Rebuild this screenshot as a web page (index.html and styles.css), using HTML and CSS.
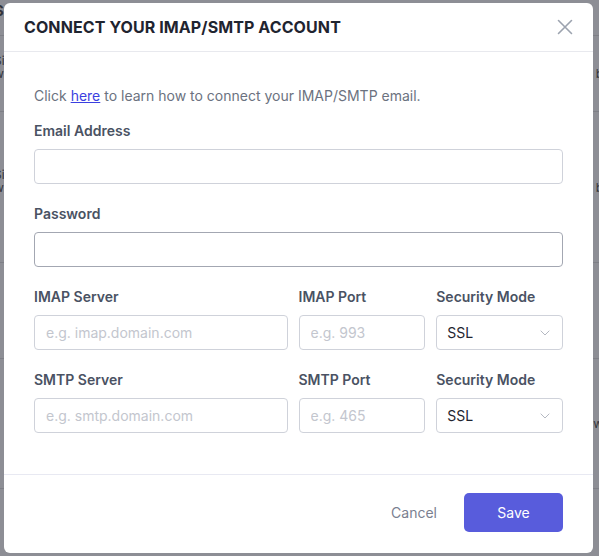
FILE: index.html
```html
<!DOCTYPE html>
<html>
<head>
<meta charset="utf-8">
<link rel="stylesheet" href="styles.css">
</head>
<body>
<div class="page">
  <div class="bg-row bg-head"><span class="bg-l bold">S</span></div>
  <div class="bg-row bg-r1"><div class="bg-col"><span>Si</span><span>w</span><span>r</span></div><span class="bg-right">b</span></div>
  <div class="bg-row bg-r2"><div class="bg-col"><span>Si</span><span>w</span><span>r</span></div><span class="bg-right">b</span></div>
  <div class="bg-row bg-r3"><div class="bg-col"><span>l</span><span>l</span></div></div>
  <div class="bg-row bg-r4"><div class="bg-col"><span>r</span></div><span class="bg-right">w</span></div>
</div>

<div class="overlay">
  <div class="modal">
    <div class="modal-header">
      <h2 class="modal-title">CONNECT YOUR IMAP/SMTP ACCOUNT</h2>
      <button class="close-btn" aria-label="Close">
        <svg width="16" height="16" viewBox="0 0 16 16"><path d="M1.5 1.5 L14.5 14.5 M14.5 1.5 L1.5 14.5" stroke="#9ca3af" stroke-width="1.6" fill="none" stroke-linecap="round"/></svg>
      </button>
    </div>
    <div class="modal-body">
      <p class="intro">Click <a href="#" class="link">here</a> to learn how to connect your IMAP/SMTP email.</p>
      <div class="field">
        <label class="label">Email Address</label>
        <input class="input" type="text">
      </div>
      <div class="field">
        <label class="label">Password</label>
        <input class="input input-dark" type="password">
      </div>
      <div class="grid-row field">
        <div>
          <label class="label">IMAP Server</label>
          <input class="input" type="text" placeholder="e.g. imap.domain.com">
        </div>
        <div>
          <label class="label">IMAP Port</label>
          <input class="input" type="text" placeholder="e.g. 993">
        </div>
        <div>
          <label class="label">Security Mode</label>
          <div class="select"><span>SSL</span><svg width="10" height="6" viewBox="0 0 10 6"><path d="M0.7 0.7 L5 5 L9.3 0.7" stroke="#b5b9c2" stroke-width="1" fill="none"/></svg></div>
        </div>
      </div>
      <div class="grid-row">
        <div>
          <label class="label">SMTP Server</label>
          <input class="input" type="text" placeholder="e.g. smtp.domain.com">
        </div>
        <div>
          <label class="label">SMTP Port</label>
          <input class="input" type="text" placeholder="e.g. 465">
        </div>
        <div>
          <label class="label">Security Mode</label>
          <div class="select"><span>SSL</span><svg width="10" height="6" viewBox="0 0 10 6"><path d="M0.7 0.7 L5 5 L9.3 0.7" stroke="#b5b9c2" stroke-width="1" fill="none"/></svg></div>
        </div>
      </div>
    </div>
    <div class="modal-footer">
      <button class="btn-cancel">Cancel</button>
      <button class="btn-save">Save</button>
    </div>
  </div>
</div>
</body>
</html>
```

FILE: styles.css
```css
* { box-sizing: border-box; }
html, body { margin: 0; padding: 0; }
body {
  width: 599px;
  height: 556px;
  overflow: hidden;
  position: relative;
  font-family: Inter, "Noto Sans", sans-serif;
  background: #8d8e95;
}

/* faint page behind the backdrop */
.page {
  width: 599px;
  height: 556px;
  display: flex;
  flex-direction: column;
  color: #33343a;
  font-size: 12px;
}
.bg-row {
  border-bottom: 1px solid #7e7f86;
  display: flex;
  justify-content: space-between;
  align-items: center;
}
.bg-head { height: 36px; align-items: flex-start; padding-top: 2px; }
.bg-l { margin-left: -6px; font-size: 15px; line-height: 18px; }
.bold { font-weight: 700; }
.bg-r1 { height: 76px; }
.bg-r2 { height: 151px; }
.bg-r3 { height: 96px; }
.bg-r4 { height: 130px; }
.bg-col {
  display: flex;
  flex-direction: column;
  margin-left: -6px;
  line-height: 13px;
}
.bg-right { margin-right: -4px; }

.overlay {
  position: absolute;
  inset: 0;
}
.modal {
  position: absolute;
  left: 4px;
  top: 3px;
  width: 589px;
  height: 550px;
  background: #fff;
  border-radius: 6px;
  display: flex;
  flex-direction: column;
  overflow: hidden;
}

.modal-header {
  height: 49px;
  border-bottom: 1px solid #e8e9ee;
  display: flex;
  align-items: center;
  justify-content: space-between;
  padding: 0 20px 0 20px;
}
.modal-title {
  margin: 0;
  font-size: 16px;
  font-weight: 700;
  color: #1f2430;
  letter-spacing: 0.1px;
}
.close-btn {
  background: none;
  border: 0;
  padding: 0;
  width: 16px;
  height: 16px;
  display: flex;
  cursor: pointer;
}

.modal-body {
  padding: 34px 30px 41px 30px;
  border-bottom: 1px solid #e8e9f2;
}
.intro {
  margin: 0 0 15px 0;
  font-size: 14px;
  line-height: 20px;
  color: #6b7280;
}
.link { color: #3b3fe0; text-decoration: underline; }

.field { margin-bottom: 20px; }
.label {
  display: block;
  font-size: 14px;
  font-weight: 600;
  line-height: 20px;
  color: #4a5263;
  margin-bottom: 8px;
}
.input {
  display: block;
  width: 100%;
  height: 35px;
  border: 1px solid #cfd2da;
  border-radius: 4px;
  padding: 0 11px;
  font-family: Inter, "Noto Sans", sans-serif;
  font-size: 14px;
  color: #1f2430;
  background: #fff;
  outline: none;
}
.input::placeholder { color: #c3c6ce; }
.input-dark { border-color: #a3a7b2; }

.grid-row {
  display: grid;
  grid-template-columns: 2fr 1fr 1fr;
  column-gap: 11px;
}
.select {
  height: 35px;
  border: 1px solid #cfd2da;
  border-radius: 4px;
  padding: 0 12px 0 10px;
  display: flex;
  align-items: center;
  justify-content: space-between;
  font-size: 14px;
  color: #1f2430;
}

.modal-footer {
  flex: 1;
  display: flex;
  justify-content: flex-end;
  align-items: flex-start;
  padding: 18px 30px 0 30px;
}
.btn-cancel {
  background: none;
  border: 0;
  padding: 0;
  height: 39px;
  font-family: Inter, "Noto Sans", sans-serif;
  font-size: 14px;
  color: #7a8090;
  margin-right: 27px;
}
.btn-save {
  width: 99px;
  height: 39px;
  border: 0;
  border-radius: 5px;
  background: #585cdc;
  color: #fff;
  font-family: Inter, "Noto Sans", sans-serif;
  font-size: 14px;
}
```
